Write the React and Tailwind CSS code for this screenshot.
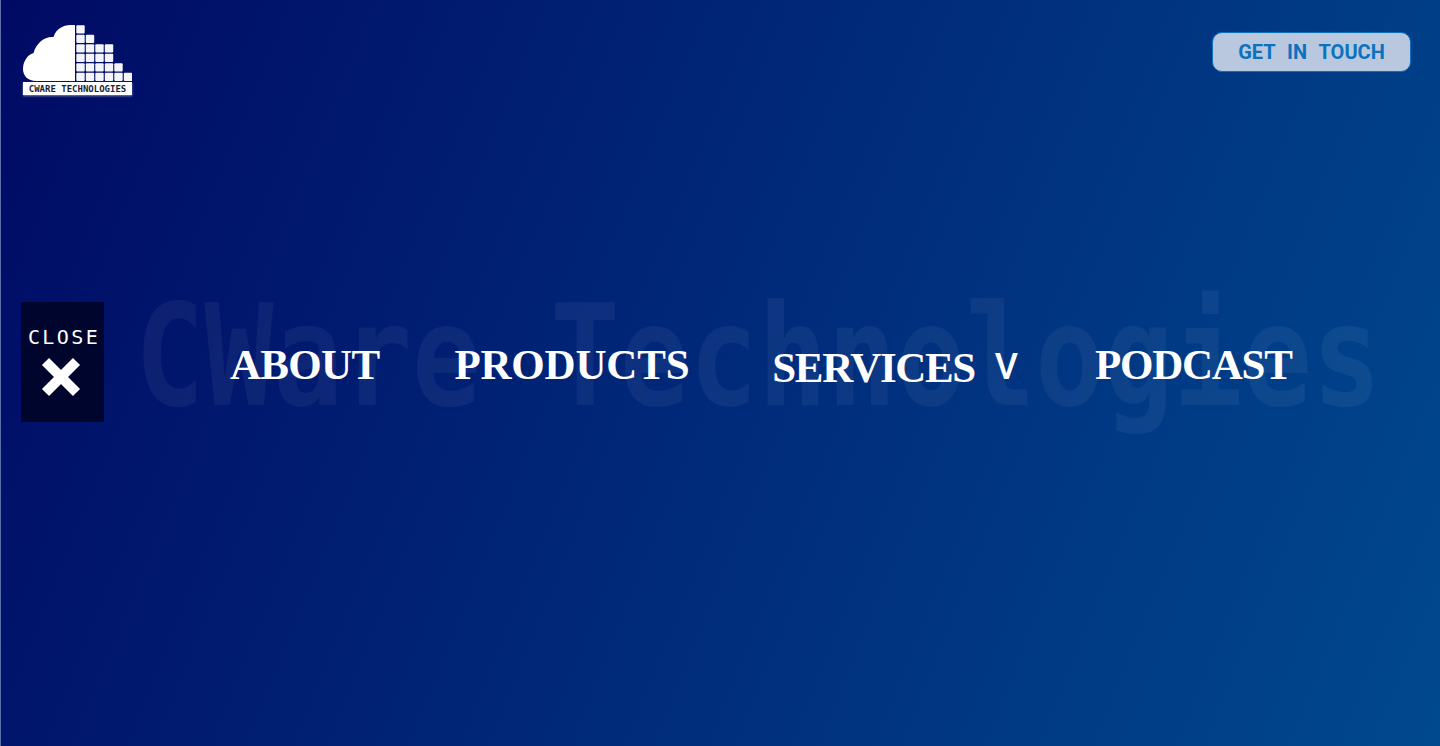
import React from 'react';

// number of stacked blocks in each column of the logo
const logoCols = [6, 5, 4, 4, 2, 1];

function Logo() {
  // cloud on the left, stepped block grid on the right
  return (
    <div className="w-[109px]">
      <svg width="109" height="58" viewBox="0 0 109 58" className="block">
        <path d="M52 0 C44 -0.500 34 1 30.500 12 C22 11 13 18 10.500 28 C4 30 0 37 0 44 C0 51 5 56 13 56 L52 56 Z" fill="#ffffff" />
        {logoCols.map((count, i) =>
          Array.from({ length: count }).map((_, j) => (
            <rect
              key={`${i}-${j}`}
              x={53.3 + i * 9.5}
              y={47.7 - j * 9.5}
              width="8.400"
              height="8.400"
              rx="1"
              fill="#f4f5fc"
            />
          ))
        )}
      </svg>
      <div className="mt-[-1px] h-[13px] bg-white shadow-[0_1px_2px_rgba(255,255,255,0.5)] flex items-center justify-center">
        <span className="font-['DejaVu_Sans_Mono',monospace] font-bold text-[9px] leading-[10px] text-[#1a1f3a] whitespace-nowrap">
          CWARE TECHNOLOGIES
        </span>
      </div>
    </div>
  );
}

function NavItem({ children, className }) {
  return (
    <a className={`font-['Liberation_Serif',serif] font-bold text-[43px] leading-none text-white whitespace-nowrap ${className}`}>
      {children}
    </a>
  );
}

export default function App() {
  return (
    <div className="relative min-h-screen overflow-hidden border-l border-[#5a6ea8] bg-[linear-gradient(112deg,#000a64,#00498f)]">
      {/* big faded wordmark behind the menu */}
      <div className="absolute left-[134px] top-[267px] font-['DejaVu_Sans_Mono',monospace] font-bold text-[115px] leading-[146px] text-white/5 whitespace-nowrap scale-y-[1.22] origin-top">
        CWare Technologies
      </div>

      <header className="relative flex justify-between items-start pl-[22px] pr-[29px] pt-[25px]">
        <Logo />
        <button className="mt-[7px] w-[199px] h-[40px] rounded-[10px] border border-[#0a70bf] bg-[#b9c8de] font-['Roboto',sans-serif] font-bold text-[20px] text-[#0a72c0] [word-spacing:7px] leading-none">
          GET IN TOUCH
        </button>
      </header>

      <main className="relative flex items-center mt-[207px] pl-[20px]">
        <button className="w-[83px] h-[120px] bg-[#00052e] flex flex-col items-center pt-[26px]">
          <span className="pl-[3px] font-['DejaVu_Sans_Mono',monospace] text-[20px] leading-[18px] tracking-[2.400px] text-white">CLOSE</span>
          <svg width="42" height="42" viewBox="0 0 42 42" className="mt-[10px] ml-[-3px]">
            <path d="M5.500 5.500 L36.500 36.500 M36.500 5.500 L5.500 36.500" stroke="#ffffff" strokeWidth="10" />
          </svg>
        </button>
        <nav className="flex items-center ml-[126px] mt-[4px]">
          <NavItem className="tracking-[-0.7px]">ABOUT</NavItem>
          <NavItem className="ml-[75px] tracking-[-0.2px]">PRODUCTS</NavItem>
          <div className="ml-[83px] mt-[6px] flex items-center">
            <NavItem className="tracking-[-1.400px]">SERVICES</NavItem>
            <span className="ml-[20px] font-['Roboto',sans-serif] font-medium text-[36px] leading-none text-white">V</span>
          </div>
          <NavItem className="ml-[77px] tracking-[-1.250px]">PODCAST</NavItem>
        </nav>
      </main>
    </div>
  );
}
